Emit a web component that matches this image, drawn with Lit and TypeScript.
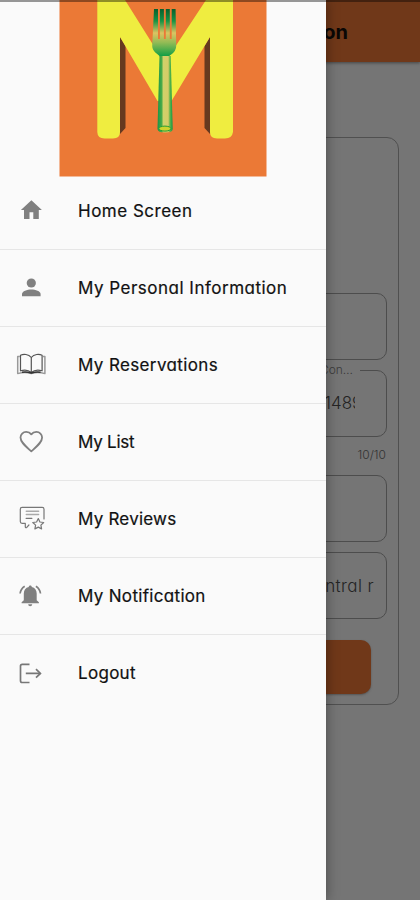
import { LitElement, html, css, svg } from "lit";
import { customElement } from "lit/decorators.js";

const icons = {
  home: svg`<path fill="#808080" d="M16.400 5.200 5.900 15H9v9h5.500v-6.700h3.800V24h5.500v-9h3.100z"/>`,
  person: svg`<g fill="#808080"><circle cx="16.300" cy="11" r="4.600"/><path d="M7 24.200v-2.100c0-3.100 5.100-4.700 9.300-4.700s9.300 1.600 9.300 4.700v2.100z"/></g>`,
  book: svg`<g fill="none" stroke-linejoin="round"><path stroke="#999" stroke-width="1.500" d="M4.800 7.400H2.700v17.200c4.600-1.300 9-1.300 13.600-.2 4.600-1.100 9-1.100 13.600.2V7.400h-2"/><path stroke="#555" stroke-width="1.200" d="M16.300 8.500C13.500 4.900 8.500 4.800 5.500 6.200v15.600c3.200-1 8-.8 10.800 1.700 2.800-2.500 7.600-2.700 10.800-1.700V6.200c-3-1.400-8-1.300-10.800 2.300v15"/><path stroke="#333" stroke-width="1.500" d="M7 23.200q4.600-.8 9.300.8 4.700-1.600 9.300-.8"/></g>`,
  heart: svg`<path fill="none" stroke="#808080" stroke-width="1.800" stroke-linejoin="round" d="M16.300 25.300 14.600 23.800C9.100 18.900 5.500 15.600 5.500 11.600c0-3.200 2.500-5.700 5.700-5.700 1.900 0 3.900.9 5.100 2.500 1.200-1.600 3.200-2.500 5.100-2.500 3.200 0 5.700 2.500 5.700 5.700 0 4-3.600 7.300-9.100 12.200z"/>`,
  review: svg`<g transform="translate(.8)" fill="none" stroke="#777" stroke-width="1.200" stroke-linejoin="round" stroke-linecap="round"><path d="M28.200 16V6.200c0-1.100-.7-1.800-1.800-1.800H6.300c-1.100 0-1.800.7-1.800 1.800v12.400c0 1.100.7 1.800 1.800 1.800h3.200v3.300c0 1.100.8 1.400 1.500.6l2.100-2.300"/><path d="M10.500 8.300h12.300M10.500 11.500h12.300" stroke="#aaa" stroke-width="1.500"/><path d="M10.300 15.300h5.800"/><path fill="#fafafa" d="m22.500 15.600 1.600 3.400 3.800.5-2.800 2.600.7 3.800-3.300-1.800-3.400 1.800.7-3.800-2.800-2.600 3.800-.5z"/></g>`,
  bell: svg`<path fill="#808080" d="M15.300 5.400c.9 0 1.500.6 1.500 1.500 3.100.7 4.900 3.300 4.900 6.500v6.800l2.200 2.100v.9H6.600v-.9l2.200-2.100v-6.800c0-3.200 1.800-5.800 4.900-6.500 0-.9.700-1.500 1.600-1.500zM13.200 24.300h4c0 1.200-.8 2-2 2s-2-.8-2-2z"/><path fill="none" stroke="#808080" stroke-width="1.700" d="M9.700 6.200Q5.600 8.900 5.100 13.500M20.900 6.200q4.100 2.700 4.600 7.300"/>`,
  logout: svg`<g fill="none" stroke="#777" stroke-width="1.700"><path d="M14.500 6.300H7.200Q5.500 6.300 5.500 8v14.800q0 1.700 1.700 1.700h7.300M10.800 15.400h14.500"/><path d="m21 11.200 4.400 4.200-4.400 4.200"/></g>`,
};

const entries = [
  { icon: icons.home, label: "Home Screen", cls: "a" },
  { icon: icons.person, label: "My Personal Information", cls: "b" },
  { icon: icons.book, label: "My Reservations", cls: "c" },
  { icon: icons.heart, label: "My List", cls: "d" },
  { icon: icons.review, label: "My Reviews", cls: "e" },
  { icon: icons.bell, label: "My Notification", cls: "f" },
  { icon: icons.logout, label: "Logout", cls: "g" },
];

@customElement("menu-drawer")
class MenuDrawer extends LitElement {
  static styles = css`
    :host { display: flex; flex-direction: column; background: #fafafa; color: #111; }
    .logo { display: block; width: 208px; height: 177px; margin-left: 59px; flex: none; }
    nav { margin-top: -4.500px; }
    .row { box-sizing: border-box; height: 77.080px; display: flex; align-items: center; border-bottom: 1.500px solid #e6e6e6; }
    .row:last-child { border-color: transparent; }
    .icon { width: 32px; height: 32px; margin: 1px 31px 0 15px; flex: none; }
    .label { font-size: 17px; white-space: nowrap; -webkit-text-stroke: 0.200px #111; }
    .a { letter-spacing: 0.500px; }
    .b { letter-spacing: 0.500px; }
    .c { letter-spacing: 0.370px; }
    .d { letter-spacing: -0.250px; }
    .e { letter-spacing: 0.220px; }
    .f { letter-spacing: 0.320px; }
    .g { letter-spacing: 0.300px; }
  `;
  render() {
    return html`
      <svg class="logo" viewBox="0 0 208 177">
        <defs>
          <linearGradient id="tines" x2="0" y2="1">
            <stop offset="0" stop-color="#075f2c" /><stop offset=".25" stop-color="#169344" />
            <stop offset=".5" stop-color="#dcc363" /><stop offset=".7" stop-color="#92bb55" /><stop offset="1" stop-color="#079c45" />
          </linearGradient>
          <linearGradient id="handle"><stop offset="0" stop-color="#159447" /><stop offset=".28" stop-color="#4bab49" />
            <stop offset=".38" stop-color="#d0d26a" /><stop offset=".7" stop-color="#d6cb67" /><stop offset=".82" stop-color="#5bb54b" /><stop offset="1" stop-color="#119745" />
          </linearGradient>
        </defs>
        <path fill="#eb7936" d="M.5 0h207v176.500H.5z" />
        <path fill="#66391f" d="M61 37l5.500 9v82L61 134zM151 37l-5.500 9v82l5.500 6z" />
        <path fill="#efed40" d="M38.300 0H66l39.500 63L147 0h27v132q-1 6.500-8 6.500h-8q-7 0-7-6.500V37l-38.500 64h-14L61 37v95q0 6.500-7 6.500h-8.500q-7 0-7.200-6.500z" />
        <path fill="url(#tines)" d="M95 9h4v30h1.900V9h4v30h1.900V9h4v30h1.900V9h3.900l.6 37q0 5-5 8.500-2 1.300-3 2.500h-8q-1-1.500-3-3-5-3.500-5-8z" />
        <path fill="url(#handle)" d="M100.500 56h11.200l2 73q0 3.500-7.500 3.500t-7.700-3.500z" />
        <ellipse cx="105.900" cy="128.600" rx="6" ry="2.500" fill="#cbd42d" stroke="#249c37" />
      </svg>
      <nav>
        ${entries.map((e) => html`<div class="row"><svg class="icon" viewBox="0 0 32 32">${e.icon}</svg><span class="label ${e.cls}">${e.label}</span></div>`)}
      </nav>
    `;
  }
}

@customElement("app-root")
class AppRoot extends LitElement {
  static styles = css`
    :host { display: block; position: relative; width: 420px; height: 900px; overflow: hidden; background: #757575; font-family: Inter, "Open Sans", sans-serif; font-feature-settings: "cv11"; }
    * { box-sizing: border-box; }
    header { height: 62px; background: #703819; display: flex; align-items: center; justify-content: flex-end; padding: 2px 72px 0 0; font-size: 20px; font-weight: 700; color: #0a0705; box-shadow: 0 1px 3px #444; }
    .card { margin: 75px 21px 0; height: 568px; border: 1px solid #505050; border-radius: 12px; padding: 155px 11px 0; display: flex; flex-direction: column; }
    .field { flex: none; height: 67px; border: 1px solid #4d4d4d; border-radius: 10px; margin-bottom: 10px; display: flex; align-items: center; justify-content: flex-end; font-size: 17px; font-weight: 300; color: #242424; padding-right: 13px; }
    .address { letter-spacing: 0.400px; padding-right: 12px; }
    .phone { position: relative; margin-bottom: 0; padding: 0 31px 1px 0; }
    .num { width: 62px; overflow: hidden; white-space: nowrap; }
    .legend { position: absolute; right: 26px; top: -8px; padding: 0 7px; background: #757575; font-size: 12px; line-height: 14px; color: #3b3b3b; }
    .count { height: 38px; flex: none; text-align: right; padding: 10px 1px 0; font-size: 12px; line-height: 16px; font-weight: 300; color: #333; }
    .button { flex: none; height: 54px; margin: 11px 16px 0; border-radius: 10px; background: #703819; box-shadow: 0 1px 2px #555; }
    menu-drawer { position: absolute; left: 0; top: 0; width: 325.600px; height: 900px; box-shadow: 0 0 12px #0006; }
    .status { position: absolute; left: 0; top: 0; width: 100%; height: 2px; background: #0006; }
  `;
  render() {
    return html`
      <header>Information</header>
      <main class="card">
        <div class="field"></div>
        <div class="field phone"><span class="legend">Con…</span><span class="num">0301489</span></div>
        <div class="count">10/10</div>
        <div class="field"></div>
        <div class="field address">Central r</div>
        <div class="button"></div>
      </main>
      <menu-drawer></menu-drawer>
      <div class="status"></div>
    `;
  }
}
